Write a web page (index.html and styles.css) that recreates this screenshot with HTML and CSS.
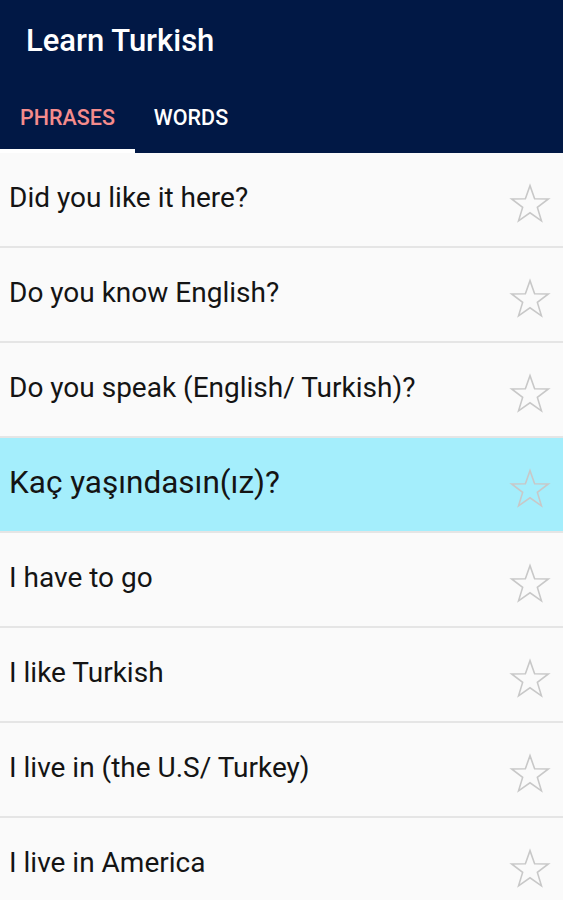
FILE: index.html
```html
<!DOCTYPE html>
<html>
<head>
<meta charset="utf-8">
<link rel="stylesheet" href="styles.css">
</head>
<body>
<header class="appbar">
  <h1 class="title">Learn Turkish</h1>
  <nav class="tabs">
    <div class="tab active">PHRASES</div>
    <div class="tab">WORDS</div>
  </nav>
</header>
<ul class="list">
  <li class="row"><span class="text">Did you like it here?</span><svg class="star" viewBox="0 0 40 40"><path d="M20 2.5 L24.4 15 L37.5 15.2 L27 23.2 L30.9 36 L20 28.4 L9.1 36 L13 23.2 L2.5 15.2 L15.6 15 Z"/></svg></li>
  <li class="row"><span class="text">Do you know English?</span><svg class="star" viewBox="0 0 40 40"><path d="M20 2.5 L24.4 15 L37.5 15.2 L27 23.2 L30.9 36 L20 28.4 L9.1 36 L13 23.2 L2.5 15.2 L15.6 15 Z"/></svg></li>
  <li class="row"><span class="text">Do you speak (English/ Turkish)?</span><svg class="star" viewBox="0 0 40 40"><path d="M20 2.5 L24.4 15 L37.5 15.2 L27 23.2 L30.9 36 L20 28.4 L9.1 36 L13 23.2 L2.5 15.2 L15.6 15 Z"/></svg></li>
  <li class="row selected"><span class="text">Kaç yaşındasın(ız)?</span><svg class="star" viewBox="0 0 40 40"><path d="M20 2.5 L24.4 15 L37.5 15.2 L27 23.2 L30.9 36 L20 28.4 L9.1 36 L13 23.2 L2.5 15.2 L15.6 15 Z"/></svg></li>
  <li class="row"><span class="text">I have to go</span><svg class="star" viewBox="0 0 40 40"><path d="M20 2.5 L24.4 15 L37.5 15.2 L27 23.2 L30.9 36 L20 28.4 L9.1 36 L13 23.2 L2.5 15.2 L15.6 15 Z"/></svg></li>
  <li class="row"><span class="text">I like Turkish</span><svg class="star" viewBox="0 0 40 40"><path d="M20 2.5 L24.4 15 L37.5 15.2 L27 23.2 L30.9 36 L20 28.4 L9.1 36 L13 23.2 L2.5 15.2 L15.6 15 Z"/></svg></li>
  <li class="row"><span class="text">I live in (the U.S/ Turkey)</span><svg class="star" viewBox="0 0 40 40"><path d="M20 2.5 L24.4 15 L37.5 15.2 L27 23.2 L30.9 36 L20 28.4 L9.1 36 L13 23.2 L2.5 15.2 L15.6 15 Z"/></svg></li>
  <li class="row"><span class="text">I live in America</span><svg class="star" viewBox="0 0 40 40"><path d="M20 2.5 L24.4 15 L37.5 15.2 L27 23.2 L30.9 36 L20 28.4 L9.1 36 L13 23.2 L2.5 15.2 L15.6 15 Z"/></svg></li>
</ul>
</body>
</html>
```
FILE: styles.css
```css
html, body {
  margin: 0;
  padding: 0;
  background: #fafafa;
  font-family: Roboto, "Noto Sans", sans-serif;
  overflow: hidden;
}
.appbar {
  background: #011845;
  height: 153px;
  display: flex;
  flex-direction: column;
}
.title {
  margin: 0;
  padding: 23px 0 0 26px;
  box-sizing: border-box;
  height: 82px;
  color: #ffffff;
  font-size: 31px;
  font-weight: 500;
  line-height: 36px;
}
.tabs {
  display: flex;
  height: 71px;
}
.tab {
  display: flex;
  align-items: center;
  justify-content: center;
  box-sizing: border-box;
  padding-top: 4px;
  border-bottom: 4px solid transparent;
  font-size: 21.5px;
  font-weight: 500;
  color: #ffffff;
  width: 135px;
}
.tab.active {
  color: #f48c8c;
  border-bottom-color: #ffffff;
}
.tab:not(.active) {
  width: 112px;
}
.list {
  list-style: none;
  margin: 0;
  padding: 0;
}
.row {
  display: flex;
  align-items: center;
  justify-content: space-between;
  height: 93px;
  padding: 0 12px 0 9px;
  border-bottom: 2px solid #e5e5e5;
  background: #fafafa;
}
.row.selected {
  background: #a4eefc;
}
.text {
  font-size: 28px;
  color: #141414;
  padding-bottom: 4px;
}
.selected .text {
  font-size: 31.5px;
}
.star {
  width: 42px;
  height: 42px;
  margin-top: 8px;
  fill: none;
  stroke: #c8c8c8;
  stroke-width: 1.5;
  stroke-linejoin: miter;
}
```
